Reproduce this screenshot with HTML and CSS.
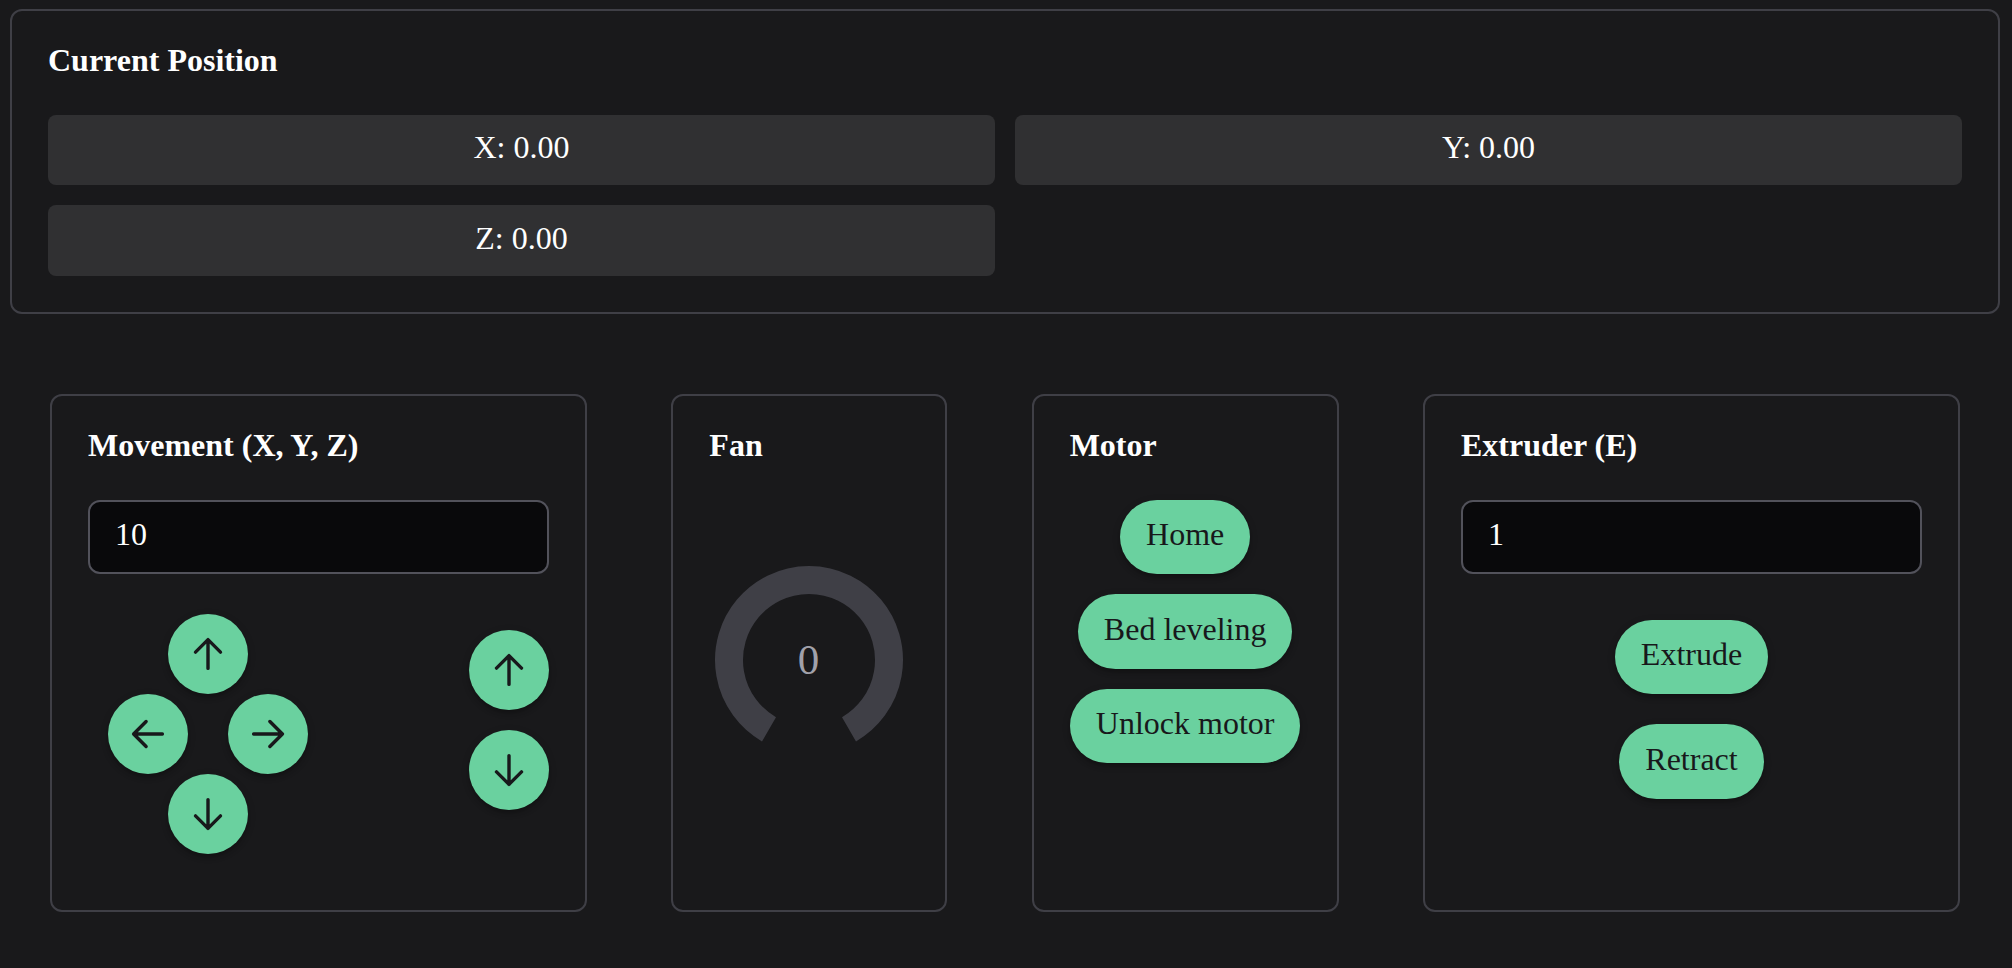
FILE: index.html
```html
<!DOCTYPE html>
<html lang="en">
<head>
<meta charset="utf-8">
<title>Printer control</title>
<link rel="stylesheet" href="styles.css">
</head>
<body>
<svg class="defs" aria-hidden="true">
  <symbol id="arrow" viewBox="0 0 40 40">
    <path d="M20 34.4V5.6M7.5 18.1L20 5.6L32.5 18.1"/>
  </symbol>
</svg>
<section class="card position">
  <h2 class="title">Current Position</h2>
  <div class="readouts">
    <div class="readout">X: 0.00</div>
    <div class="readout">Y: 0.00</div>
    <div class="readout">Z: 0.00</div>
  </div>
</section>
<main class="panels">
  <section class="card wide">
    <h2 class="title">Movement (X, Y, Z)</h2>
    <input class="field" type="text" value="10" aria-label="Step">
    <div class="jog">
      <div class="pad">
        <button class="round up" aria-label="Y plus"><svg class="icon"><use href="#arrow"/></svg></button>
        <button class="round left" aria-label="X minus"><svg class="icon turn-left"><use href="#arrow"/></svg></button>
        <button class="round right" aria-label="X plus"><svg class="icon turn-right"><use href="#arrow"/></svg></button>
        <button class="round down" aria-label="Y minus"><svg class="icon turn-down"><use href="#arrow"/></svg></button>
      </div>
      <div class="lift">
        <button class="round" aria-label="Z plus"><svg class="icon"><use href="#arrow"/></svg></button>
        <button class="round" aria-label="Z minus"><svg class="icon turn-down"><use href="#arrow"/></svg></button>
      </div>
    </div>
  </section>
  <section class="card fan">
    <h2 class="title">Fan</h2>
    <svg class="knob" viewBox="0 0 100 100">
      <path class="knob-range" d="M30 84.641A40 40 0 1 1 70 84.641"/>
      <text class="knob-text" x="49.7" y="57">0</text>
    </svg>
  </section>
  <section class="card motor">
    <h2 class="title">Motor</h2>
    <div class="stack">
      <button class="pill">Home</button>
      <button class="pill">Bed leveling</button>
      <button class="pill">Unlock motor</button>
    </div>
  </section>
  <section class="card wide">
    <h2 class="title">Extruder (E)</h2>
    <input class="field" type="text" value="1" aria-label="Length">
    <div class="stack feed">
      <button class="pill">Extrude</button>
      <button class="pill">Retract</button>
    </div>
  </section>
</main>
</body>
</html>
```
FILE: styles.css
```css
* { box-sizing: border-box; }
body {
  margin: 0;
  padding: 9px 12px 0 10px;
  background: #19191b;
  color: #fff;
  font-family: "Liberation Serif", "Times New Roman", serif;
  font-size: 32px;
}
.defs { position: absolute; width: 0; height: 0; }
.card {
  border: 2px solid #3f3f46;
  border-radius: 12px;
  padding: 30px 36px 36px;
}
.position { height: 305px; }
.title {
  margin: 0 0 36px;
  font-size: 32px;
  line-height: 38px;
  font-weight: 700;
  white-space: nowrap;
}
.readouts {
  display: grid;
  grid-template-columns: 1fr 1fr;
  gap: 20px;
}
.readout {
  height: 70.4px;
  padding-top: 14.2px;
  border-radius: 8px;
  background: #303032;
  line-height: 36px;
  text-align: center;
}
.panels {
  display: flex;
  justify-content: space-between;
  height: 518px;
  margin: 80px 40px 0;
}
.wide { width: 537px; }
.fan { width: 276px; }
.motor { width: 307px; }
.field {
  display: block;
  width: 100%;
  height: 74px;
  padding: 0 25px 5px;
  border: 2px solid #52525b;
  border-radius: 12px;
  background: #09090b;
  color: #fff;
  font: inherit;
}
.jog {
  display: flex;
  justify-content: space-between;
  align-items: flex-start;
  padding: 40px 0 0 20px;
}
.pad {
  display: grid;
  grid-template-columns: 60px 20px 40px 20px 60px;
  grid-template-rows: repeat(3, 80px);
}
.up { grid-area: 1 / 2 / 2 / 5; }
.left { grid-area: 2 / 1 / 3 / 3; }
.right { grid-area: 2 / 4 / 3 / 6; }
.down { grid-area: 3 / 2 / 4 / 5; }
.lift {
  display: flex;
  flex-direction: column;
  gap: 20px;
  padding-top: 16px;
}
.round, .pill {
  border: 0;
  background: #6ad19f;
  color: #18181b;
  font: inherit;
  box-shadow: 0 4px 4px -1px rgba(0,0,0,.22), 0 2px 8px rgba(0,0,0,.14);
}
.round {
  display: grid;
  place-items: center;
  width: 80px;
  height: 80px;
  padding: 0;
  border-radius: 50%;
}
.icon {
  width: 40px;
  height: 40px;
  fill: none;
  stroke: currentColor;
  stroke-width: 3.4;
  stroke-linecap: round;
  stroke-linejoin: round;
}
.turn-left { transform: rotate(-90deg); }
.turn-right { transform: rotate(90deg); }
.turn-down { transform: rotate(180deg); }
.knob {
  display: block;
  width: 200px;
  height: 200px;
  margin-top: 96px;
}
.knob-range { fill: none; stroke: #3f3f46; stroke-width: 14; }
.knob-text { fill: #a1a1aa; font-size: 21.5px; text-anchor: middle; }
.stack {
  display: flex;
  flex-direction: column;
  align-items: center;
  gap: 20px;
}
.pill {
  height: 74.4px;
  padding: 0 26px 5px;
  border-radius: 38px;
  white-space: nowrap;
}
.feed { gap: 30px; padding-top: 46px; }
```
